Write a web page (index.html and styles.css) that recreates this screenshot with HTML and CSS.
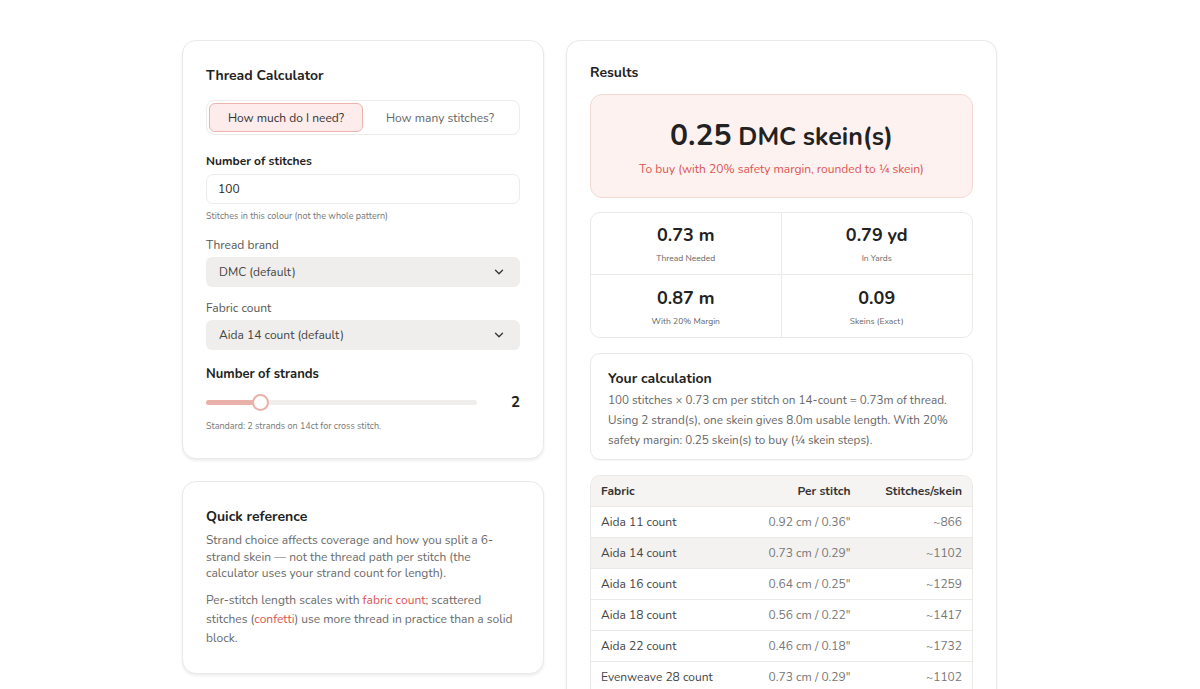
FILE: index.html
```html
<!DOCTYPE html>
<html lang="en">
<head>
  <meta charset="UTF-8">
  <meta name="viewport" content="width=device-width, initial-scale=1.0">
  <title>Thread Calculator</title>
  <link rel="stylesheet" href="styles.css">
</head>
<body>

<div class="page">
  <div class="col-left">
    <div class="card calc-card">
      <h2>Thread Calculator</h2>

      <div class="toggle">
        <button class="toggle-btn active">How much do I need?</button>
        <button class="toggle-btn">How many stitches?</button>
      </div>

      <label class="label-strong" for="stitches">Number of stitches</label>
      <input class="text-input" id="stitches" type="text" value="100">
      <p class="hint">Stitches in this colour (not the whole pattern)</p>

      <label class="label first" for="brand">Thread brand</label>
      <div class="select" id="brand">
        <span>DMC (default)</span>
        <svg width="14" height="14" viewBox="0 0 24 24" fill="none" stroke="#333" stroke-width="2.2" stroke-linecap="round" stroke-linejoin="round"><path d="M6 9l6 6 6-6"/></svg>
      </div>

      <label class="label" for="fabric">Fabric count</label>
      <div class="select" id="fabric">
        <span>Aida 14 count (default)</span>
        <svg width="14" height="14" viewBox="0 0 24 24" fill="none" stroke="#333" stroke-width="2.2" stroke-linecap="round" stroke-linejoin="round"><path d="M6 9l6 6 6-6"/></svg>
      </div>

      <div class="label-big">Number of strands</div>
      <div class="slider-row">
        <div class="slider">
          <div class="slider-fill" style="width: 20%"></div>
          <div class="slider-thumb" style="left: 20%"></div>
        </div>
        <span class="slider-value">2</span>
      </div>
      <p class="hint">Standard: 2 strands on 14ct for cross stitch.</p>
    </div>

    <div class="card ref-card">
      <h3>Quick reference</h3>
      <p class="ref-text">Strand choice affects coverage and how you split a 6-strand skein — not the thread path per stitch (the calculator uses your strand count for length).</p>
      <p class="ref-text loose">Per-stitch length scales with <a href="#">fabric count</a>; scattered stitches (<a href="#">confetti</a>) use more thread in practice than a solid block.</p>
    </div>
  </div>

  <div class="card results-card">
    <h2>Results</h2>

    <div class="hero">
      <div class="hero-value"><span class="hero-num">0.25</span> DMC skein(s)</div>
      <div class="hero-sub">To buy (with 20% safety margin, rounded to ¼ skein)</div>
    </div>

    <div class="stats">
      <div class="stat">
        <div class="stat-value">0.73 m</div>
        <div class="stat-label">Thread Needed</div>
      </div>
      <div class="stat">
        <div class="stat-value">0.79 yd</div>
        <div class="stat-label">In Yards</div>
      </div>
      <div class="stat">
        <div class="stat-value">0.87 m</div>
        <div class="stat-label">With 20% Margin</div>
      </div>
      <div class="stat">
        <div class="stat-value">0.09</div>
        <div class="stat-label">Skeins (Exact)</div>
      </div>
    </div>

    <div class="explain">
      <h3>Your calculation</h3>
      <p>100 stitches × 0.73 cm per stitch on 14-count = 0.73m of thread. Using 2 strand(s), one skein gives 8.0m usable length. With 20% safety margin: 0.25 skein(s) to buy (¼ skein steps).</p>
    </div>

    <table class="fabric-table">
      <thead>
        <tr>
          <th>Fabric</th>
          <th class="num">Per stitch</th>
          <th class="num">Stitches/skein</th>
        </tr>
      </thead>
      <tbody>
        <tr><td>Aida 11 count</td><td class="num">0.92 cm / 0.36"</td><td class="num">~866</td></tr>
        <tr class="current"><td>Aida 14 count</td><td class="num">0.73 cm / 0.29"</td><td class="num">~1102</td></tr>
        <tr><td>Aida 16 count</td><td class="num">0.64 cm / 0.25"</td><td class="num">~1259</td></tr>
        <tr><td>Aida 18 count</td><td class="num">0.56 cm / 0.22"</td><td class="num">~1417</td></tr>
        <tr><td>Aida 22 count</td><td class="num">0.46 cm / 0.18"</td><td class="num">~1732</td></tr>
        <tr><td>Evenweave 28 count</td><td class="num">0.73 cm / 0.29"</td><td class="num">~1102</td></tr>
      </tbody>
    </table>
  </div>
</div>

</body>
</html>
```

FILE: styles.css
```css
* {
  margin: 0;
  padding: 0;
  box-sizing: border-box;
}

body {
  background: #ffffff;
  color: #222;
  font-family: 'Nunito', 'Lato', 'Noto Sans', sans-serif;
  overflow: hidden;
}

.page {
  display: flex;
  align-items: flex-start;
  gap: 22px;
  padding: 40px 0 0 182px;
}

.col-left {
  width: 362px;
  display: flex;
  flex-direction: column;
  gap: 22px;
}

.card {
  background: #fff;
  border: 1px solid #ebe9e6;
  border-radius: 14px;
  box-shadow: 0 2px 3px rgba(0, 0, 0, 0.07);
}

h2 {
  font-size: 14px;
  font-weight: 700;
  color: #222;
}

h3 {
  font-size: 14px;
  font-weight: 700;
  color: #222;
}

/* calculator */
.calc-card {
  padding: 25px 23px 26px 23px;
}

.toggle {
  display: flex;
  margin-top: 15px;
  border: 1px solid #eeece9;
  border-radius: 8px;
  padding: 2px;
  height: 35px;
}

.toggle-btn {
  flex: 1;
  border: 1px solid transparent;
  background: none;
  border-radius: 6px;
  font-family: inherit;
  font-size: 12px;
  color: #666;
}

.toggle-btn.active {
  background: #fdeceb;
  border-color: #eeb3ae;
  color: #333;
}

.label-strong {
  display: block;
  margin-top: 18px;
  font-size: 12px;
  font-weight: 700;
  color: #222;
}

.label {
  display: block;
  margin-top: 13px;
  font-size: 12px;
  color: #555;
}

.label.first {
  margin-top: 15px;
}

.text-input {
  display: block;
  width: 100%;
  height: 30px;
  margin-top: 5px;
  border: 1px solid #eeece9;
  border-radius: 7px;
  padding: 0 11px;
  font-family: inherit;
  font-size: 12px;
  color: #222;
}

.hint {
  margin-top: 6px;
  font-size: 9px;
  color: #777;
}

.select {
  display: flex;
  align-items: center;
  justify-content: space-between;
  height: 30px;
  margin-top: 4px;
  padding: 0 14px 0 13px;
  background: #efeeec;
  border-radius: 6px;
  font-size: 12px;
  color: #444;
}

.label-big {
  margin-top: 15px;
  font-size: 13px;
  font-weight: 700;
  color: #222;
}

.slider-row {
  display: flex;
  align-items: center;
  gap: 34px;
  margin-top: 9px;
  height: 20px;
}

.slider {
  position: relative;
  flex: 1;
  height: 5px;
  border-radius: 3px;
  background: #efeeec;
}

.slider-fill {
  height: 100%;
  border-radius: 3px;
  background: #eab1aa;
}

.slider-thumb {
  position: absolute;
  top: 50%;
  width: 17px;
  height: 17px;
  margin: -8.5px 0 0 -8.5px;
  border-radius: 50%;
  background: #fff;
  border: 2px solid #eab1aa;
}

.slider-value {
  font-size: 15px;
  font-weight: 700;
  color: #222;
}

.calc-card .hint:last-child {
  margin-top: 8px;
}

/* quick reference */
.ref-card {
  padding: 25px 23px 25px 23px;
}

.ref-text {
  margin-top: 6px;
  font-size: 12px;
  line-height: 16.5px;
  color: #6a6a6a;
}

.ref-text.loose {
  margin-top: 9px;
  line-height: 19px;
}

.ref-text a {
  color: #d9534f;
  text-decoration: none;
}

/* results */
.results-card {
  width: 431px;
  padding: 22px 23px 0 23px;
  height: 680px;
  border-bottom: none;
}

.hero {
  margin-top: 12px;
  height: 104px;
  background: #fef2f0;
  border: 1px solid #f6d9d4;
  border-radius: 12px;
  display: flex;
  flex-direction: column;
  align-items: center;
  justify-content: center;
  gap: 5px;
}

.hero-value {
  font-size: 25px;
  font-weight: 700;
  color: #222;
}

.hero-num {
  font-size: 30px;
}

.hero-sub {
  font-size: 12px;
  color: #dc5550;
}

.stats {
  margin-top: 14px;
  display: grid;
  grid-template-columns: 1fr 1fr;
  border: 1px solid #ebe9e6;
  border-radius: 10px;
  overflow: hidden;
}

.stat {
  height: 62px;
  display: flex;
  flex-direction: column;
  align-items: center;
  justify-content: center;
  gap: 5px;
}

.stat:nth-child(odd) {
  border-right: 1px solid #ebe9e6;
}

.stat:nth-child(-n+2) {
  border-bottom: 1px solid #ebe9e6;
}

.stat-value {
  font-size: 18px;
  font-weight: 700;
  color: #222;
}

.stat-label {
  font-size: 8.5px;
  color: #666;
}

.explain {
  margin-top: 15px;
  border: 1px solid #ebe9e6;
  border-radius: 10px;
  padding: 15px 12px 9px 17px;
  box-shadow: 0 1px 2px rgba(0, 0, 0, 0.04);
}

.explain p {
  margin-top: 2px;
  font-size: 11.7px;
  line-height: 20px;
  color: #666;
}

.fabric-table {
  margin-top: 15px;
  width: 100%;
  border-collapse: separate;
  border-spacing: 0;
  border: 1px solid #ebe9e6;
  border-bottom: none;
  border-radius: 10px 10px 0 0;
  overflow: hidden;
  font-size: 12px;
}

.fabric-table th {
  height: 31px;
  background: #f5f4f2;
  text-align: left;
  font-weight: 700;
  color: #333;
  padding: 0 10px;
  border-bottom: 1px solid #ebe9e6;
}

.fabric-table td {
  height: 31px;
  padding: 0 10px;
  color: #444;
  border-bottom: 1px solid #ebe9e6;
}

.fabric-table .num {
  text-align: right;
}

.fabric-table td.num {
  color: #777;
}

.fabric-table tr.current td {
  background: #f3f2f0;
}
```
